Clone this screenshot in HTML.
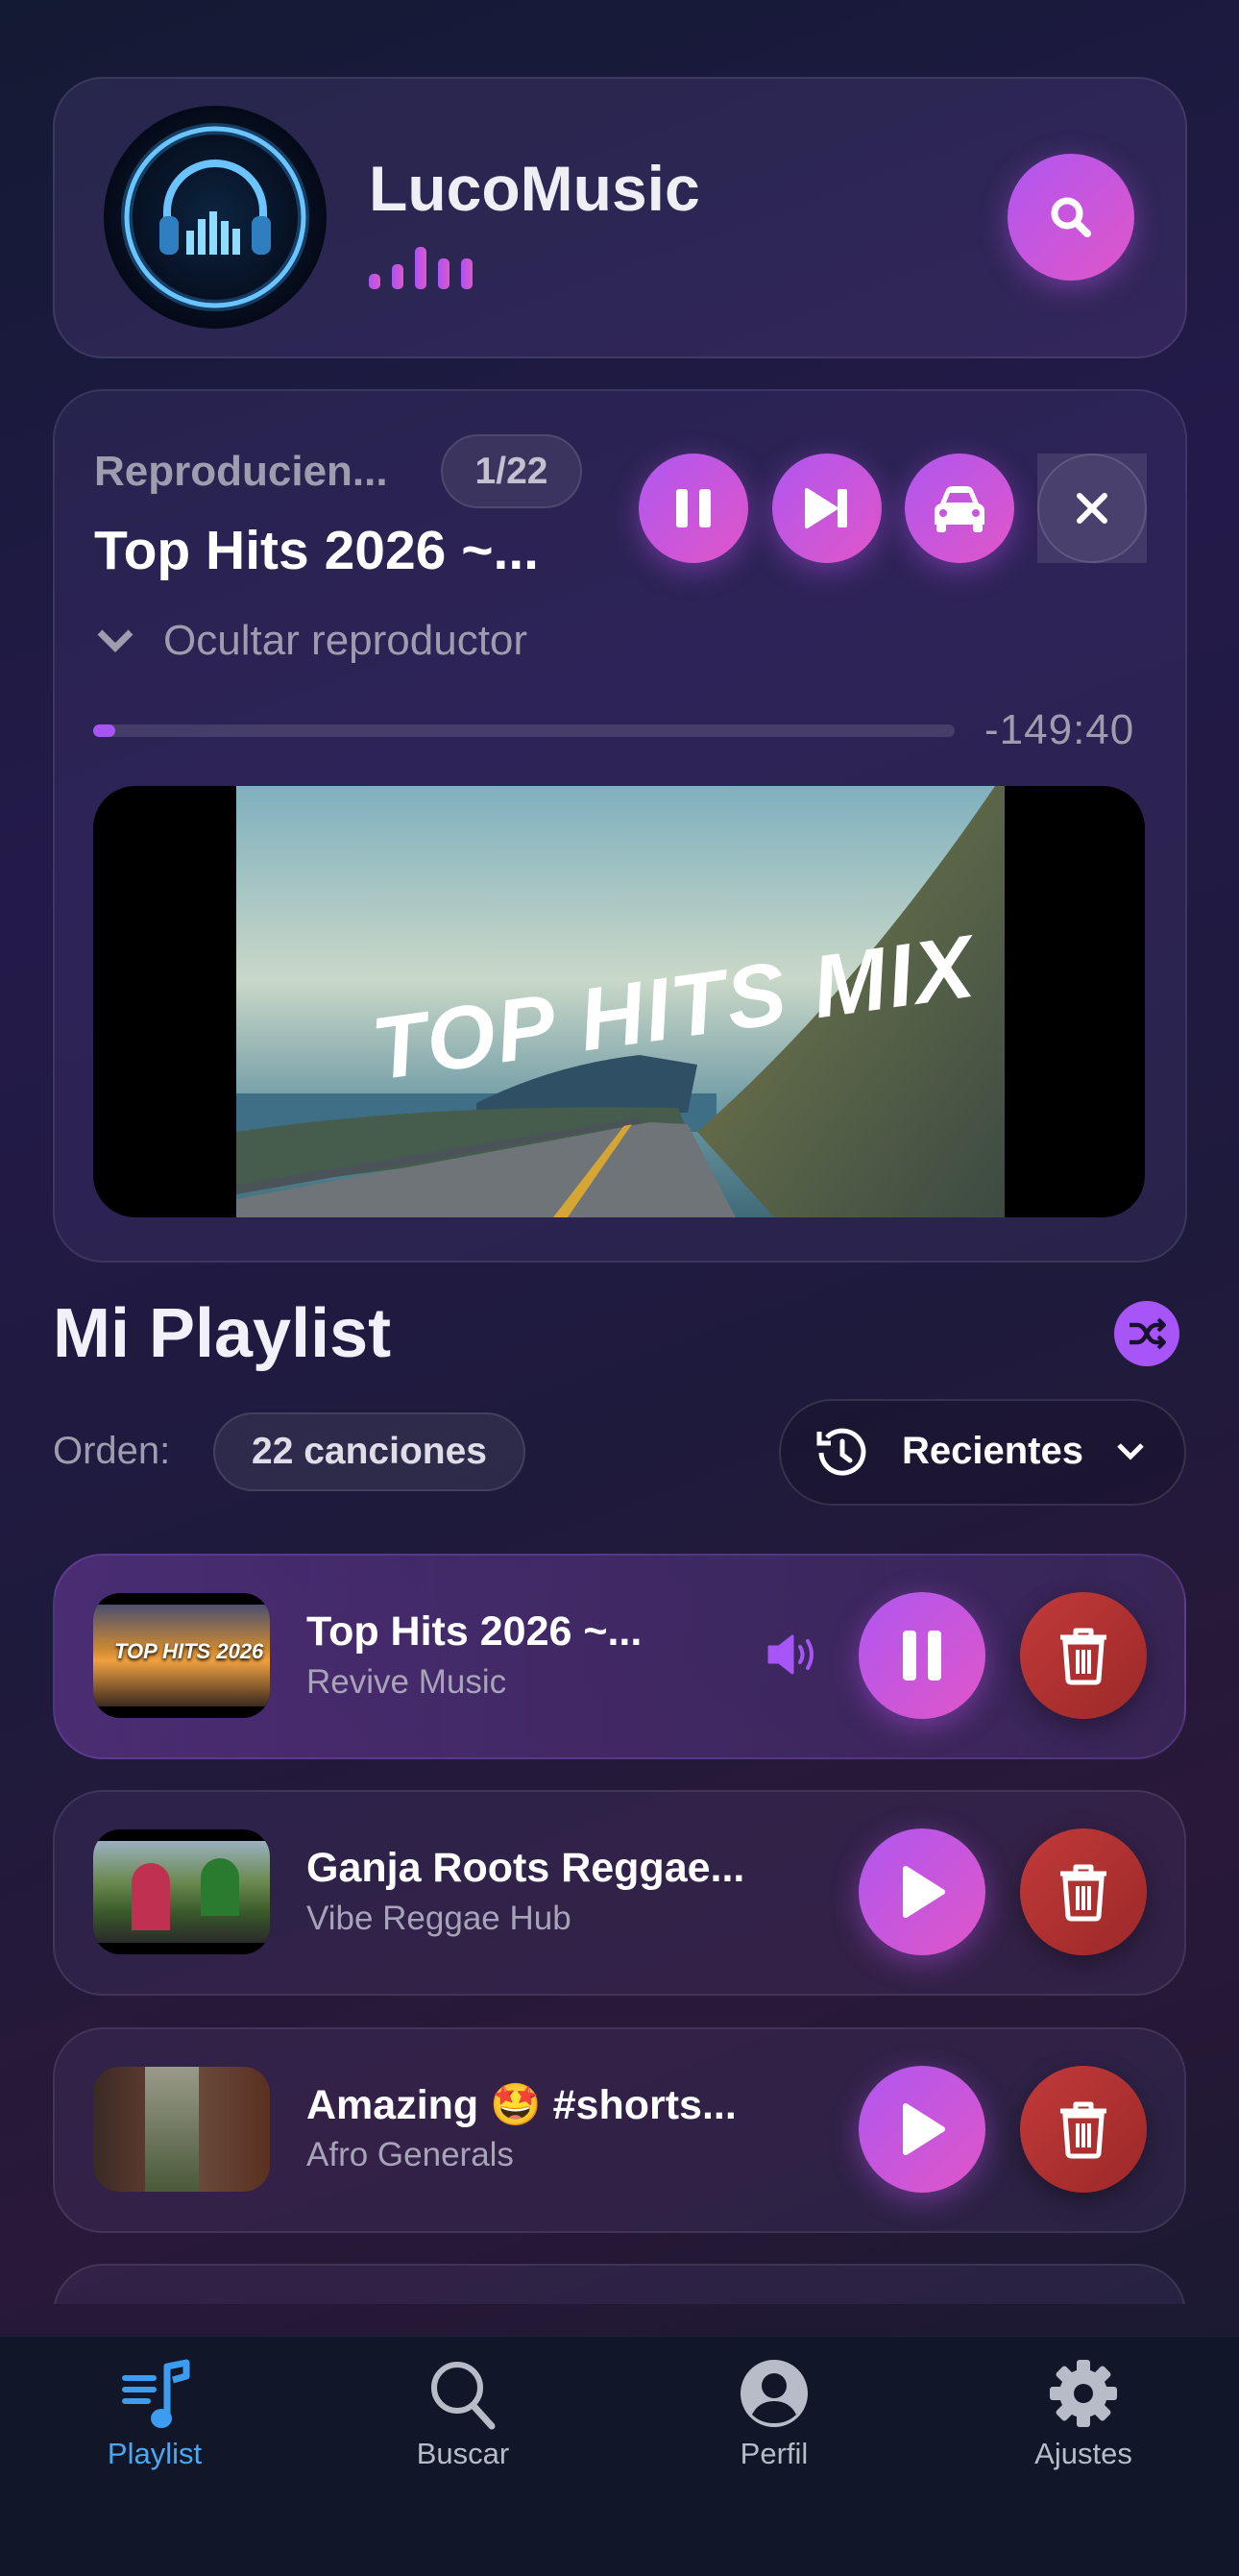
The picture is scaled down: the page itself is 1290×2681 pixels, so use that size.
<!DOCTYPE html>
<html><head><meta charset="utf-8">
<style>
*{margin:0;padding:0;box-sizing:border-box}
body{width:1290px;height:2681px;overflow:hidden;font-family:"Liberation Sans","Noto Sans CJK JP",sans-serif;background:linear-gradient(160deg,#131a33 0%,#241a4a 30%,#1e1a3c 55%,#2a1838 75%,#141a2e 100%);position:relative;color:#fff}
.abs{position:absolute}
.card{position:absolute;border-radius:52px;background:rgba(160,130,230,0.09);border:2px solid rgba(255,255,255,0.09)}
.btn{position:absolute;border-radius:50%;background:linear-gradient(135deg,#b057f0,#e055c8);box-shadow:0 8px 30px rgba(180,80,230,0.45);display:flex;align-items:center;justify-content:center}
.del{position:absolute;border-radius:50%;background:linear-gradient(135deg,#c23a3a,#9c2828);display:flex;align-items:center;justify-content:center;box-shadow:0 8px 24px rgba(0,0,0,.35)}
.title{font-weight:bold;font-size:43px;color:#fff;white-space:nowrap}
.sub{font-size:35px;color:#a8a3b8}
.navl{position:absolute;top:2536px;font-size:31px;color:#b8bcc8;width:200px;text-align:center}
</style></head><body>

<!-- header -->
<div class="card" style="left:55px;top:80px;width:1181px;height:293px;background:rgba(170,130,240,0.12)"></div>
<div class="abs" style="left:108px;top:110px;width:232px;height:232px;border-radius:50%;background:radial-gradient(circle,#0c2440 0%,#050a18 70%,#0a0f1e 100%)">
<svg width="232" height="232" viewBox="0 0 232 232">
<circle cx="116" cy="116" r="92" fill="none" stroke="#7fd2ff" stroke-width="5"/>
<circle cx="116" cy="116" r="92" fill="none" stroke="#3aa8ff" stroke-width="12" opacity=".3"/>
<path d="M66 130 V110 A50 50 0 0 1 166 110 V130" fill="none" stroke="#6cc4ff" stroke-width="8"/>
<rect x="58" y="115" width="20" height="40" rx="8" fill="#2f7ec0"/>
<rect x="154" y="115" width="20" height="40" rx="8" fill="#2f7ec0"/>
<g fill="#8fdcff"><rect x="86" y="130" width="8" height="25"/><rect x="98" y="118" width="8" height="37"/><rect x="110" y="110" width="8" height="45"/><rect x="122" y="120" width="8" height="35"/><rect x="134" y="128" width="8" height="27"/></g>
</svg></div>
<div class="abs" style="left:384px;top:158px;font-size:66px;font-weight:bold;color:#f0eef5">LucoMusic</div>
<svg class="abs" style="left:384px;top:255px" width="112" height="46">
<defs><linearGradient id="bg" x1="0" x2="1"><stop offset="0" stop-color="#a855f7"/><stop offset="1" stop-color="#e056c8"/></linearGradient></defs>
<g fill="url(#bg)"><rect x="0" y="30" width="12" height="16" rx="5"/><rect x="24" y="20" width="12" height="26" rx="5"/><rect x="48" y="2" width="12" height="44" rx="5"/><rect x="72" y="14" width="12" height="32" rx="5"/><rect x="96" y="14" width="12" height="32" rx="5"/></g></svg>
<div class="btn" style="left:1049px;top:160px;width:132px;height:132px"><svg width="50" height="50" viewBox="0 0 50 50"><circle cx="21" cy="21" r="13" fill="none" stroke="#fff" stroke-width="7"/><path d="M31 31 L42 42" stroke="#fff" stroke-width="8" stroke-linecap="round"/></svg></div>

<!-- player -->
<div class="card" style="left:55px;top:405px;width:1181px;height:909px"></div>
<div class="abs" style="left:98px;top:466px;font-size:44px;font-weight:bold;color:#a09cb0">Reproducien...</div>
<div class="abs" style="left:459px;top:452px;width:147px;height:77px;border-radius:39px;background:rgba(255,255,255,0.08);border:2px solid rgba(255,255,255,0.1);font-size:39px;font-weight:bold;color:#c4c0d0;text-align:center;line-height:73px">1/22</div>
<div class="abs" style="left:98px;top:540px;font-size:57px;font-weight:bold;color:#fff">Top Hits 2026 ~...</div>
<svg class="abs" style="left:100px;top:652px" width="40" height="30"><path d="M4 6 L20 22 L36 6" fill="none" stroke="#a09cb0" stroke-width="7"/></svg>
<div class="abs" style="left:170px;top:642px;font-size:44px;color:#a09cb0">Ocultar reproductor</div>
<div class="btn" style="left:665px;top:472px;width:114px;height:114px"><svg width="40" height="44"><rect x="2" y="2" width="12" height="40" rx="3" fill="#fff"/><rect x="26" y="2" width="12" height="40" rx="3" fill="#fff"/></svg></div>
<div class="btn" style="left:804px;top:472px;width:114px;height:114px"><svg width="50" height="44"><path d="M4 3 L34 22 L4 41Z" fill="#fff" stroke="#fff" stroke-width="4" stroke-linejoin="round"/><rect x="36" y="2" width="10" height="40" rx="2" fill="#fff"/></svg></div>
<div class="btn" style="left:942px;top:472px;width:114px;height:114px"><svg width="64" height="54" viewBox="0 0 64 54"><path d="M12 22 L18 8 Q20 4 25 4 H39 Q44 4 46 8 L52 22 Q58 24 58 30 V44 H6 V30 Q6 24 12 22Z" fill="#fff"/><path d="M18 21 L22 11 H42 L46 21Z" fill="#c557dc"/><circle cx="15" cy="32" r="4" fill="#c557dc"/><circle cx="49" cy="32" r="4" fill="#c557dc"/><rect x="8" y="42" width="10" height="10" rx="3" fill="#fff"/><rect x="46" y="42" width="10" height="10" rx="3" fill="#fff"/></svg></div>
<div class="abs" style="left:1080px;top:472px;width:114px;height:114px;background:rgba(255,255,255,0.1)"><div style="width:114px;height:114px;border-radius:50%;background:rgba(255,255,255,0.04);border:2px solid rgba(255,255,255,0.12);display:flex;align-items:center;justify-content:center"><svg width="36" height="36"><path d="M5 5 L31 31 M31 5 L5 31" stroke="#fff" stroke-width="6" stroke-linecap="round"/></svg></div></div>
<div class="abs" style="left:97px;top:754px;width:897px;height:13px;border-radius:7px;background:rgba(255,255,255,0.12)"></div>
<div class="abs" style="left:97px;top:754px;width:23px;height:13px;border-radius:7px;background:#a855f7"></div>
<div class="abs" style="left:1025px;top:735px;font-size:44px;color:#a09cb0;letter-spacing:1px">-149:40</div>
<div class="abs" style="left:97px;top:818px;width:1095px;height:449px;border-radius:44px;background:#000;overflow:hidden">
<svg class="abs" style="left:149px;top:0" width="800" height="449" viewBox="0 0 800 449">
<defs><linearGradient id="sky" x1="0" y1="0" x2="0" y2="1"><stop offset="0" stop-color="#7fb0be"/><stop offset=".45" stop-color="#c9d8c8"/><stop offset=".75" stop-color="#6e9aa5"/><stop offset="1" stop-color="#3f6b78"/></linearGradient>
<linearGradient id="hill" x1="0" y1="0" x2="1" y2="1"><stop offset="0" stop-color="#8a7a4a"/><stop offset=".5" stop-color="#5a6548"/><stop offset="1" stop-color="#3c4a42"/></linearGradient></defs>
<rect width="800" height="449" fill="url(#sky)"/>
<path d="M0 320 H500 V360 H0Z" fill="#3e6f86"/>
<path d="M250 330 Q330 290 420 280 L480 290 L470 340 H250Z" fill="#2f5064"/>
<path d="M0 360 Q200 330 460 335 L470 360 L0 420Z" fill="#465c4c"/>
<path d="M0 430 L430 350 L470 352 L520 449 H0Z" fill="#6e7478"/>
<path d="M405 352 L330 449 H345 L412 352Z" fill="#d6a635"/>
<path d="M0 415 L420 345 L425 350 L0 425Z" fill="#4a5458"/>
<path d="M800 0 L790 0 Q640 220 480 360 L560 449 H800Z" fill="url(#hill)"/>
<text x="140" y="270" font-family="Liberation Sans" font-style="italic" font-weight="bold" font-size="92" fill="#fff" transform="rotate(-8 400 240)" style="letter-spacing:2px">TOP HITS MIX</text>
</svg></div>

<!-- playlist header -->
<div class="abs" style="left:55px;top:1347px;font-size:72px;font-weight:bold;color:#f2f0f8">Mi Playlist</div>
<div class="abs" style="left:1160px;top:1354px;width:68px;height:68px;border-radius:50%;background:#a855f7;display:flex;align-items:center;justify-content:center"><svg width="40" height="34" viewBox="0 0 40 34"><path d="M2 8 H10 Q16 8 20 17 Q24 26 30 26 H36 M2 26 H10 Q16 26 20 17 Q24 8 30 8 H36" fill="none" stroke="#1a1030" stroke-width="4.5"/><path d="M32 2 L38 8 L32 14 M32 20 L38 26 L32 32" fill="none" stroke="#1a1030" stroke-width="4"/></svg></div>
<div class="abs" style="left:55px;top:1488px;font-size:40px;color:#a09cb0">Orden:</div>
<div class="abs" style="left:222px;top:1470px;width:325px;height:82px;border-radius:41px;background:rgba(255,255,255,0.07);border:2px solid rgba(255,255,255,0.1);font-size:39px;font-weight:bold;color:#e0dde8;text-align:center;line-height:78px">22 canciones</div>
<div class="abs" style="left:811px;top:1456px;width:424px;height:111px;border-radius:56px;background:rgba(0,0,0,0.15);border:2px solid rgba(255,255,255,0.12)"></div>
<svg class="abs" style="left:843px;top:1480px" width="64" height="64" viewBox="0 0 64 64"><path d="M12 32 A22 22 0 1 0 18 16" fill="none" stroke="#fff" stroke-width="5"/><path d="M10 10 V22 H22" fill="none" stroke="#fff" stroke-width="5"/><path d="M34 20 V34 L42 40" fill="none" stroke="#fff" stroke-width="5" stroke-linecap="round"/></svg>
<div class="abs" style="left:939px;top:1488px;font-size:40px;font-weight:bold;color:#fff">Recientes</div>
<svg class="abs" style="left:1162px;top:1500px" width="30" height="22"><path d="M3 4 L15 16 L27 4" fill="none" stroke="#fff" stroke-width="5"/></svg>

<!-- items -->
<div class="card" style="left:55px;top:1617px;width:1180px;height:214px;background:linear-gradient(90deg,rgba(110,60,160,0.55),rgba(90,60,140,0.35));border-color:rgba(180,120,255,0.2)"></div>
<div class="abs" style="left:97px;top:1658px;width:184px;height:130px;border-radius:28px;background:#000;overflow:hidden"><div style="position:absolute;left:0;top:12px;width:184px;height:106px;background:linear-gradient(180deg,#4a5070 0%,#d08a30 45%,#f0a040 55%,#3a2a20 100%)"></div><div style="position:absolute;left:22px;top:48px;font-size:22px;font-style:italic;font-weight:bold;color:#fff;text-shadow:0 2px 3px #000">TOP HITS 2026</div></div>
<div class="abs title" style="left:319px;top:1674px">Top Hits 2026 ~...</div>
<div class="abs sub" style="left:319px;top:1731px">Revive Music</div>
<svg class="abs" style="left:797px;top:1700px" width="56" height="44" viewBox="0 0 56 44"><path d="M4 14 H14 L28 3 V41 L14 30 H4Z" fill="#a855f7" stroke="#a855f7" stroke-width="3" stroke-linejoin="round"/><path d="M36 14 Q41 22 36 30 M44 8 Q52 22 44 36" fill="none" stroke="#a855f7" stroke-width="4" stroke-linecap="round"/></svg>
<div class="btn" style="left:894px;top:1657px;width:132px;height:132px"><svg width="44" height="56"><rect x="2" y="2" width="14" height="52" rx="4" fill="#fff"/><rect x="28" y="2" width="14" height="52" rx="4" fill="#fff"/></svg></div>
<div class="del" style="left:1062px;top:1657px;width:132px;height:132px"><svg width="56" height="62" viewBox="0 0 56 62"><path d="M4 12 H52 M20 12 V5 H36 V12" fill="none" stroke="#fff" stroke-width="5" stroke-linejoin="round"/><path d="M9 17 L12 56 Q12 59 16 59 H40 Q44 59 44 56 L47 17Z" fill="none" stroke="#fff" stroke-width="5"/><path d="M22 25 V50 M28 25 V50 M34 25 V50" stroke="#fff" stroke-width="4"/></svg></div>

<div class="card" style="left:55px;top:1863px;width:1180px;height:214px"></div>
<div class="abs" style="left:97px;top:1904px;width:184px;height:130px;border-radius:28px;background:#000;overflow:hidden"><div style="position:absolute;left:0;top:12px;width:184px;height:106px;background:linear-gradient(180deg,#9ab0c0 0%,#6a8a50 40%,#3a5a2a 70%,#2a2a2a 100%)"></div><div style="position:absolute;left:40px;top:35px;width:40px;height:70px;background:#c03050;border-radius:20px 20px 0 0"></div><div style="position:absolute;left:112px;top:30px;width:40px;height:60px;background:#2a7a30;border-radius:20px 20px 0 0"></div></div>
<div class="abs title" style="left:319px;top:1920px">Ganja Roots Reggae...</div>
<div class="abs sub" style="left:319px;top:1977px">Vibe Reggae Hub</div>
<div class="btn" style="left:894px;top:1903px;width:132px;height:132px"><svg width="50" height="56"><path d="M8 4 L46 28 L8 52Z" fill="#fff" stroke="#fff" stroke-width="6" stroke-linejoin="round"/></svg></div>
<div class="del" style="left:1062px;top:1903px;width:132px;height:132px"><svg width="56" height="62" viewBox="0 0 56 62"><path d="M4 12 H52 M20 12 V5 H36 V12" fill="none" stroke="#fff" stroke-width="5" stroke-linejoin="round"/><path d="M9 17 L12 56 Q12 59 16 59 H40 Q44 59 44 56 L47 17Z" fill="none" stroke="#fff" stroke-width="5"/><path d="M22 25 V50 M28 25 V50 M34 25 V50" stroke="#fff" stroke-width="4"/></svg></div>

<div class="card" style="left:55px;top:2110px;width:1180px;height:214px"></div>
<div class="abs" style="left:97px;top:2151px;width:184px;height:130px;border-radius:28px;background:linear-gradient(90deg,#3a2a24 0%,#5a3a30 30%,#8a7a6a 35%,#6a4a3a 60%,#5a3020 100%);overflow:hidden"><div style="position:absolute;left:54px;top:0;width:56px;height:130px;background:linear-gradient(180deg,#9a9a8a,#4a5a3a)"></div></div>
<div class="abs title" style="left:319px;top:2166px">Amazing 🤩 #shorts...</div>
<div class="abs sub" style="left:319px;top:2223px">Afro Generals</div>
<div class="btn" style="left:894px;top:2150px;width:132px;height:132px"><svg width="50" height="56"><path d="M8 4 L46 28 L8 52Z" fill="#fff" stroke="#fff" stroke-width="6" stroke-linejoin="round"/></svg></div>
<div class="del" style="left:1062px;top:2150px;width:132px;height:132px"><svg width="56" height="62" viewBox="0 0 56 62"><path d="M4 12 H52 M20 12 V5 H36 V12" fill="none" stroke="#fff" stroke-width="5" stroke-linejoin="round"/><path d="M9 17 L12 56 Q12 59 16 59 H40 Q44 59 44 56 L47 17Z" fill="none" stroke="#fff" stroke-width="5"/><path d="M22 25 V50 M28 25 V50 M34 25 V50" stroke="#fff" stroke-width="4"/></svg></div>

<div class="abs" style="left:55px;top:2356px;width:1180px;height:42px;overflow:hidden"><div class="card" style="left:0;top:0;width:1180px;height:214px"></div></div>

<!-- nav -->
<div class="abs" style="left:0;top:2431px;width:1290px;height:250px;background:#111629;border-top:1px solid #1c2238"></div>
<svg class="abs" style="left:124px;top:2455px" width="74" height="76" viewBox="0 0 74 76"><g stroke="#3b9cf0" stroke-width="6" stroke-linecap="round"><path d="M6 20 H36 M6 32 H36 M6 44 H30"/></g><path d="M50 58 V8 L70 4 V18 L56 22" fill="none" stroke="#3b9cf0" stroke-width="7" stroke-linejoin="round"/><ellipse cx="44" cy="62" rx="11" ry="10" fill="#3b9cf0"/></svg>
<div class="navl" style="left:61px;color:#4aa8f0">Playlist</div>
<svg class="abs" style="left:446px;top:2455px" width="72" height="76" viewBox="0 0 72 76"><circle cx="30" cy="30" r="24" fill="none" stroke="#b8bcc8" stroke-width="6"/><path d="M48 50 L66 70" stroke="#b8bcc8" stroke-width="7" stroke-linecap="round"/></svg>
<div class="navl" style="left:382px">Buscar</div>
<svg class="abs" style="left:770px;top:2455px" width="72" height="72" viewBox="0 0 72 72"><circle cx="36" cy="36" r="35" fill="#b8bcc8"/><circle cx="36" cy="28" r="13" fill="#111629"/><path d="M13 58 Q20 44 36 44 Q52 44 59 58 Q50 67 36 67 Q22 67 13 58Z" fill="#111629"/></svg>
<div class="navl" style="left:706px">Perfil</div>
<svg class="abs" style="left:1092px;top:2455px" width="72" height="72" viewBox="0 0 72 72"><g fill="#b8bcc8"><circle cx="36" cy="36" r="25"/><g id="t"><rect x="29" y="1" width="14" height="16" rx="3"/><rect x="29" y="55" width="14" height="16" rx="3"/></g><use href="#t" transform="rotate(45 36 36)"/><use href="#t" transform="rotate(90 36 36)"/><use href="#t" transform="rotate(135 36 36)"/></g><circle cx="36" cy="36" r="10" fill="#111629"/></svg>
<div class="navl" style="left:1028px">Ajustes</div>
</body></html>
